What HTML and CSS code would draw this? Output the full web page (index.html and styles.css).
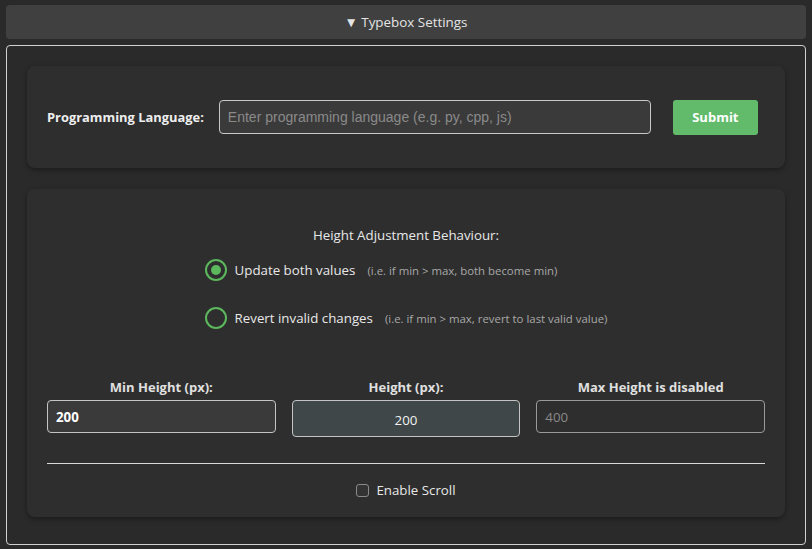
FILE: index.html
```html
<!DOCTYPE html>
<html lang="en">
<head>
<meta charset="utf-8">
<title>Typebox Settings</title>
<link rel="stylesheet" href="styles.css">
</head>
<body>
<div class="page">
  <div class="summary">&#9660; Typebox Settings</div>
  <div class="panel">
    <div class="card lang-card">
      <label class="lang-label" for="lang">Programming Language:</label>
      <input class="lang-input" id="lang" type="text" placeholder="Enter programming language (e.g. py, cpp, js)">
      <button class="submit" type="button">Submit</button>
    </div>
    <div class="card height-card">
      <div class="behaviour-title">Height Adjustment Behaviour:</div>
      <div class="radio-group">
        <label class="radio-row">
          <span class="radio checked"><span class="dot"></span></span>
          <span class="radio-text">Update both values</span>
          <span class="hint">(i.e. if min &gt; max, both become min)</span>
        </label>
        <label class="radio-row">
          <span class="radio"></span>
          <span class="radio-text">Revert invalid changes</span>
          <span class="hint">(i.e. if min &gt; max, revert to last valid value)</span>
        </label>
      </div>
      <div class="fields">
        <div class="field">
          <div class="field-label">Min Height (px):</div>
          <div class="field-input min">200</div>
        </div>
        <div class="field">
          <div class="field-label">Height (px):</div>
          <div class="field-input mid">200</div>
        </div>
        <div class="field">
          <div class="field-label">Max Height is disabled</div>
          <div class="field-input disabled">400</div>
        </div>
      </div>
      <div class="divider"></div>
      <label class="scroll-row"><span class="checkbox"></span><span>Enable Scroll</span></label>
    </div>
  </div>
</div>
</body>
</html>
```
FILE: styles.css
```css
* { box-sizing: border-box; }
html, body { margin: 0; padding: 0; }
body {
  background: #2a2a2a;
  color: #e6e6e6;
  font-family: "Open Sans", "Noto Sans", sans-serif;
  font-size: 13.3px;
}
.page {
  padding: 5px 6px 0 6px;
  height: 549px;
}
.summary {
  height: 34px;
  background: #404040;
  border-radius: 4px;
  display: flex;
  align-items: center;
  justify-content: center;
  font-size: 13.4px;
  color: #e4e4e4;
}
.panel {
  margin-top: 6px;
  border: 1px solid #d0d0d0;
  border-radius: 4px;
  padding: 20px 20px 25px 20px;
  height: 500px;
}
.card {
  background: #2e2e2e;
  border-radius: 8px;
  box-shadow: 0 2px 5px rgba(0,0,0,0.35);
}
.lang-card {
  display: flex;
  align-items: center;
  height: 102px;
  padding: 0 26px 0 20px;
}
.lang-label {
  font-weight: 700;
  font-size: 12.9px;
  color: #eeeeee;
  margin-right: 15px;
  white-space: nowrap;
}
.lang-input {
  width: 432px;
  height: 34px;
  background: #3a3a3a;
  border: 1px solid #c8c8c8;
  border-radius: 4px;
  color: #ddd;
  font-family: "Liberation Sans", Arial, sans-serif;
  font-size: 14px;
  padding: 0 8px;
  outline: none;
}
.lang-input::placeholder { color: #8a8a8a; }
.submit {
  margin-left: 22px;
  width: 85px;
  height: 35px;
  background: #62bb6a;
  color: #fff;
  border: none;
  border-radius: 3px;
  font-family: "Open Sans", "Noto Sans", sans-serif;
  font-weight: 700;
  font-size: 13px;
}
.height-card {
  margin-top: 21px;
  height: 328px;
  padding: 37px 20px 0 20px;
  display: flex;
  flex-direction: column;
  align-items: center;
}
.behaviour-title {
  font-size: 13.3px;
  color: #e8e8e8;
  line-height: 18px;
}
.radio-group {
  margin-top: 15px;
  display: flex;
  flex-direction: column;
  gap: 26px;
  align-self: center;
}
.radio-row {
  display: flex;
  align-items: center;
  height: 22px;
}
.radio {
  width: 22px;
  height: 22px;
  border: 2px solid #5cb85c;
  border-radius: 50%;
  display: flex;
  align-items: center;
  justify-content: center;
  flex: none;
}
.radio .dot {
  width: 10px;
  height: 10px;
  border-radius: 50%;
  background: #5cb85c;
}
.radio-text {
  margin-left: 8px;
  font-size: 13.3px;
  color: #e8e8e8;
}
.hint {
  margin-left: 12px;
  font-size: 11.4px;
  color: #a8a8a8;
}
.fields {
  margin-top: 49px;
  align-self: stretch;
  display: grid;
  grid-template-columns: 1fr 1fr 1fr;
  gap: 16px;
  align-items: start;
}
.field {
  display: flex;
  flex-direction: column;
  align-items: stretch;
}
.field-label {
  text-align: center;
  font-weight: 700;
  font-size: 13px;
  color: #e0e0e0;
  line-height: 18px;
  margin-bottom: 4px;
}
.field-input {
  height: 33px;
  border: 1px solid #c4c4c4;
  border-radius: 4px;
  background: #3a3a3a;
  display: flex;
  align-items: center;
  padding: 0 8px;
  font-size: 13.3px;
  color: #fff;
}
.field-input.min { font-weight: 700; }
.field-input.mid {
  height: 37px;
  background: #3f4749;
  justify-content: center;
  color: #f2f2f2;
  padding-top: 2px;
}
.field-input.disabled {
  background: #2e2e2e;
  border-color: #9a9a9a;
  color: #8a8a8a;
}
.divider {
  align-self: stretch;
  margin-top: 26px;
  height: 1px;
  background: #d8d8d8;
}
.scroll-row {
  margin-top: 17px;
  display: flex;
  align-items: center;
  gap: 7px;
  font-size: 13.3px;
  color: #e8e8e8;
}
.checkbox {
  width: 13px;
  height: 13px;
  border: 1px solid #8a8a8a;
  border-radius: 3px;
  background: #333;
}
```
